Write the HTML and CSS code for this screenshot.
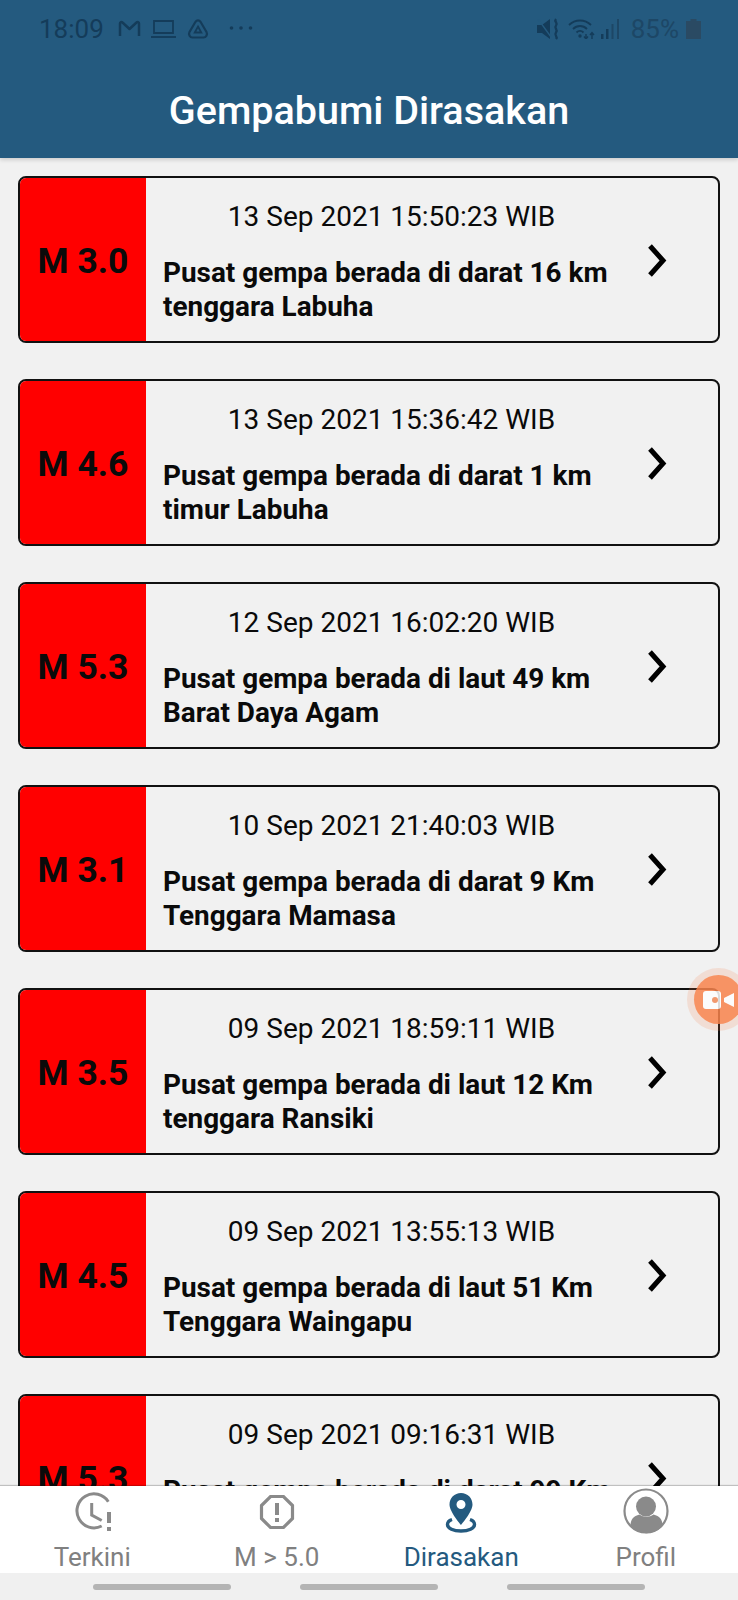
FILE: index.html
```html
<!DOCTYPE html>
<html>
<head>
  <title>Gempabumi Dirasakan</title>
  <link rel="stylesheet" href="styles.css">
</head>
<body>
  <div id="top">
    <div id="status">
      <div class="status-left">
        <span>18:09</span>
        <svg class="ic-mail" width="23" height="18" viewBox="0 0 23 18"><path d="M2 16V3.500C2 2 3.500 1.500 4.500 2.500L11.500 9l7-6.500C19.500 1.500 21 2 21 3.500V16" fill="none" stroke="#143c5a" stroke-width="2.500" stroke-linejoin="round"/></svg>
        <svg class="ic-laptop" width="25" height="18" viewBox="0 0 25 18"><path d="M3 1h19v12H3z" fill="none" stroke="#143c5a" stroke-width="1.800"/><path d="M0 17h25" stroke="#143c5a" stroke-width="1.800"/></svg>
        <svg class="ic-drive" width="22" height="20" viewBox="0 0 22 20"><path d="M8.500 2.800c1.200-1.900 3.800-1.900 5 0l6 10.200c1.200 2.400-.3 5.500-3 5.500h-11c-2.700 0-4.200-3.100-3-5.500z" fill="none" stroke="#143c5a" stroke-width="2.200"/><path d="M11 7.500l3.300 6H7.700z" fill="none" stroke="#143c5a" stroke-width="1.800"/></svg>
        <svg class="ic-dots" width="24" height="6" viewBox="0 0 24 6"><circle cx="2.500" cy="3" r="1.800" fill="#143c5a"/><circle cx="12" cy="3" r="1.800" fill="#143c5a"/><circle cx="21.500" cy="3" r="1.800" fill="#143c5a"/></svg>
      </div>
      <div class="status-right">
        <svg class="ic-mute" width="23" height="22" viewBox="0 0 23 22"><path d="M0 7h5l8-6v20l-8-6H0z" fill="#143c5a"/><path d="M1 1l13 18" stroke="#245a7f" stroke-width="1.300"/><path d="M19 1c-2.500 3 2.500 3.500 0 6.500s2.500 3.500 0 7 2.500 3.500 0 6.500" fill="none" stroke="#143c5a" stroke-width="2.300"/></svg>
        <svg class="ic-wifi" width="27" height="20" viewBox="0 0 27 20"><path d="M1 6c6-6 16-6 22 0M5 10c4-4 10-4 14 0M8.500 13.500c2-2 5-2 7 0" fill="none" stroke="#143c5a" stroke-width="1.800"/><circle cx="12" cy="17" r="1.700" fill="#143c5a"/><path d="M18 20v-5M16 17.500l2 2.500 2-2.500M24 20v-6M22 16l2-2.500 2 2.500" fill="none" stroke="#143c5a" stroke-width="1.400"/></svg>
        <svg class="ic-signal" width="19" height="20" viewBox="0 0 19 20"><rect x="0" y="15" width="2.500" height="5" fill="#143c5a"/><rect x="5" y="10" width="2.500" height="10" fill="#143c5a"/><rect x="10.500" y="5" width="2" height="15" fill="#1d4766"/><rect x="16" y="0" width="2" height="20" fill="#1d4766"/></svg>
        <span class="pct">85%</span>
        <svg class="ic-batt" width="15" height="20" viewBox="0 0 15 20"><path d="M4.500 0h6v2H15v18H0V2h4.500z" fill="#2a4a63"/></svg>
      </div>
    </div>
    <h1>Gempabumi Dirasakan</h1>
  </div>

  <div id="list">
    <div class="quake">
      <div class="mag">M 3.0</div>
      <div class="info">
        <div class="time">13 Sep 2021 15:50:23 WIB</div>
        <div class="place">Pusat gempa berada di darat 16 km tenggara Labuha</div>
      </div>
      <svg class="chev" width="24" height="36" viewBox="0 0 24 36"><path d="M6 3l13 14.500L6 32"/></svg>
    </div>
    <div class="quake">
      <div class="mag">M 4.6</div>
      <div class="info">
        <div class="time">13 Sep 2021 15:36:42 WIB</div>
        <div class="place">Pusat gempa berada di darat 1 km timur Labuha</div>
      </div>
      <svg class="chev" width="24" height="36" viewBox="0 0 24 36"><path d="M6 3l13 14.500L6 32"/></svg>
    </div>
    <div class="quake">
      <div class="mag">M 5.3</div>
      <div class="info">
        <div class="time">12 Sep 2021 16:02:20 WIB</div>
        <div class="place">Pusat gempa berada di laut 49 km Barat Daya Agam</div>
      </div>
      <svg class="chev" width="24" height="36" viewBox="0 0 24 36"><path d="M6 3l13 14.500L6 32"/></svg>
    </div>
    <div class="quake">
      <div class="mag">M 3.1</div>
      <div class="info">
        <div class="time">10 Sep 2021 21:40:03 WIB</div>
        <div class="place">Pusat gempa berada di darat 9 Km Tenggara Mamasa</div>
      </div>
      <svg class="chev" width="24" height="36" viewBox="0 0 24 36"><path d="M6 3l13 14.500L6 32"/></svg>
    </div>
    <div class="quake">
      <div class="mag">M 3.5</div>
      <div class="info">
        <div class="time">09 Sep 2021 18:59:11 WIB</div>
        <div class="place">Pusat gempa berada di laut 12 Km tenggara Ransiki</div>
      </div>
      <svg class="chev" width="24" height="36" viewBox="0 0 24 36"><path d="M6 3l13 14.500L6 32"/></svg>
    </div>
    <div class="quake">
      <div class="mag">M 4.5</div>
      <div class="info">
        <div class="time">09 Sep 2021 13:55:13 WIB</div>
        <div class="place">Pusat gempa berada di laut 51 Km Tenggara Waingapu</div>
      </div>
      <svg class="chev" width="24" height="36" viewBox="0 0 24 36"><path d="M6 3l13 14.500L6 32"/></svg>
    </div>
    <div class="quake">
      <div class="mag">M 5.3</div>
      <div class="info">
        <div class="time">09 Sep 2021 09:16:31 WIB</div>
        <div class="place">Pusat gempa berada di darat 99 Km</div>
      </div>
      <svg class="chev" width="24" height="36" viewBox="0 0 24 36"><path d="M6 3l13 14.500L6 32"/></svg>
    </div>
  </div>

  <div id="tabs">
    <div class="tab">
      <svg width="46" height="46" viewBox="0 0 46 46"><path d="M39.300 13.700A17 17 0 1 0 32.700 38" fill="none" stroke="#8a8a8a" stroke-width="3"/><path d="M22.700 15v12l10 5.500" fill="none" stroke="#8a8a8a" stroke-width="3"/><rect x="38" y="24" width="4" height="11" fill="#8a8a8a"/><rect x="38" y="39" width="4" height="4" fill="#8a8a8a"/></svg>
      <span>Terkini</span>
    </div>
    <div class="tab">
      <svg width="46" height="46" viewBox="0 0 46 46"><path d="M16.500 8.500h13l9 9v13l-9 9h-13l-9-9v-13z" fill="none" stroke="#8a8a8a" stroke-width="3.200"/><rect x="21" y="15" width="4" height="12" fill="#8a8a8a"/><rect x="21" y="30" width="4" height="4" fill="#8a8a8a"/></svg>
      <span>M &gt; 5.0</span>
    </div>
    <div class="tab active">
      <svg width="46" height="46" viewBox="0 0 46 46"><path d="M23 5C16.500 5 11.500 10 11.500 16.500 11.500 24 23 37 23 37s11.500-13 11.500-20.500C34.500 10 29.500 5 23 5zm0 16a4.500 4.500 0 1 1 0-9 4.500 4.500 0 0 1 0 9z" fill="#245a7f" fill-rule="evenodd"/><path d="M14 31.500c-3 1-4.500 3-4.500 5 0 4 6 6.500 13.500 6.500s13.500-2.500 13.500-6.500c0-2-1.500-4-4.500-5" fill="none" stroke="#245a7f" stroke-width="3.400"/></svg>
      <span>Dirasakan</span>
    </div>
    <div class="tab">
      <svg width="46" height="46" viewBox="0 0 46 46"><circle cx="23" cy="23" r="21.500" fill="none" stroke="#8a8a8a" stroke-width="2.200"/><circle cx="23" cy="18.500" r="10" fill="#8a8a8a"/><path d="M7.500 38c0-7 3-10 9-11.500 4 3 10 3 14 0 6 1.500 9 4.500 9 11.500-8 9.500-24 9.500-32 0z" fill="#8a8a8a"/></svg>
      <span>Profil</span>
    </div>
  </div>

  <div id="navbar">
    <div class="pill"></div>
    <div class="pill"></div>
    <div class="pill"></div>
  </div>

  <div id="rec">
    <svg width="31" height="18" viewBox="0 0 31 18"><rect x="0" y="0" width="18" height="18" rx="3" fill="#fff"/><path d="M21 7l10-5v14l-10-5z" fill="#fff"/><circle cx="12" cy="9" r="3" fill="#f28a58"/></svg>
  </div>
</body>
</html>
```

FILE: styles.css
```css
html, body {
  margin: 0;
  height: 1600px;
  overflow: hidden;
}
body {
  font-family: Roboto, sans-serif;
  background-color: #f1f1f1;
  display: flex;
  flex-direction: column;
  position: relative;
}
#top {
  height: 158px;
  flex-shrink: 0;
  background-color: #245a7f;
  box-shadow: 0 2px 4px rgba(0, 0, 0, 0.15);
  position: relative;
  z-index: 1;
}
#status {
  display: flex;
  justify-content: space-between;
  align-items: center;
  height: 58px;
  padding: 0 37px 0 39px;
  color: #143c5a;
  font-size: 26px;
}
.status-left, .status-right {
  display: flex;
  align-items: center;
}
.ic-mail {
  margin-left: 14px;
}
.ic-laptop {
  margin-left: 10px;
}
.ic-drive {
  margin-left: 11px;
}
.ic-dots {
  margin-left: 20px;
  margin-bottom: 2px;
}
.ic-wifi {
  margin-left: 8px;
}
.ic-signal {
  margin-left: 6px;
}
.pct {
  margin-left: 11px;
  color: #1d4766;
}
.ic-batt {
  margin-left: 7px;
}
h1 {
  margin: 0;
  text-align: center;
  color: #fff;
  font-size: 39.500px;
  font-weight: 500;
  line-height: 48px;
  padding-top: 29px;
}
#list {
  flex: 1;
  min-height: 0;
  overflow: hidden;
  padding: 18px 18px 0;
  display: flex;
  flex-direction: column;
  gap: 36px;
}
.quake {
  flex-shrink: 0;
  height: 167px;
  box-sizing: border-box;
  border: 2px solid #111;
  border-radius: 8px;
  overflow: hidden;
  display: flex;
  align-items: stretch;
}
.mag {
  width: 126px;
  flex-shrink: 0;
  background-color: #f00;
  color: #0a0a0a;
  font-size: 35.500px;
  font-weight: 700;
  display: flex;
  align-items: center;
  justify-content: center;
  padding-top: 3px;
  box-sizing: border-box;
}
.info {
  flex: 1;
  min-width: 0;
  padding: 20px 24px 0 17px;
}
.time {
  text-align: center;
  font-size: 28px;
  line-height: 38px;
  color: #0a0a0a;
}
.place {
  margin-top: 20px;
  font-size: 27.900px;
  font-weight: 700;
  line-height: 33.500px;
  color: #0a0a0a;
}
.chev {
  flex-shrink: 0;
  margin: 65px 50px 0 0;
}
.chev path {
  fill: none;
  stroke: #000;
  stroke-width: 5;
}
#tabs {
  height: 87px;
  flex-shrink: 0;
  background-color: #fff;
  display: grid;
  grid-template-columns: repeat(4, 1fr);
  position: relative;
  z-index: 1;
  box-shadow: 0 -1px 1px rgba(0, 0, 0, 0.2);
}
.tab {
  display: flex;
  flex-direction: column;
  align-items: center;
  justify-content: flex-end;
  color: #808080;
  font-size: 26px;
  line-height: 32px;
}
.tab svg {
  margin-bottom: 7px;
}
.tab.active {
  color: #245a7f;
}
#navbar {
  height: 27px;
  flex-shrink: 0;
  background-color: #f0f0f0;
  display: flex;
  justify-content: space-between;
  align-items: center;
  padding: 0 93px;
}
.pill {
  width: 138px;
  height: 6px;
  border-radius: 3px;
  background-color: #b4b4b4;
}
#rec {
  position: absolute;
  left: 694px;
  top: 975px;
  width: 49px;
  height: 49px;
  border-radius: 50%;
  background-color: #f9834c;
  box-shadow: 0 0 0 7px rgba(249, 131, 76, 0.2);
  display: flex;
  align-items: center;
  justify-content: center;
  opacity: 0.85;
}
```
